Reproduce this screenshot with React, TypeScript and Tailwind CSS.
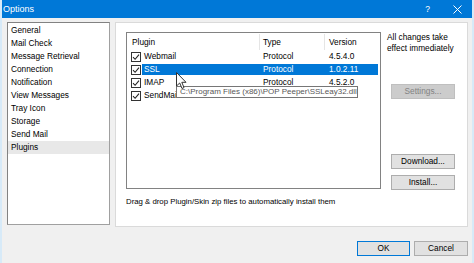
import React from "react";

const categories = [
  "General",
  "Mail Check",
  "Message Retrieval",
  "Connection",
  "Notification",
  "View Messages",
  "Tray Icon",
  "Storage",
  "Send Mail",
  "Plugins",
];

const plugins = [
  { name: "Webmail", type: "Protocol", version: "4.5.4.0" },
  { name: "SSL", type: "Protocol", version: "1.0.2.11" },
  { name: "IMAP", type: "Protocol", version: "4.5.2.0" },
  { name: "SendMail", type: "Protocol", version: "4.5.2.0" },
];

const CheckBox: React.FC = () => (
  <div className="w-[10px] h-[10px] border border-[#333] bg-white flex items-center justify-center shrink-0">
    <svg width="8" height="8" viewBox="0 0 8 8">
      <path d="M1 4.2 L3.1 6.3 L7 1.6" fill="none" stroke="#222" strokeWidth="1.1" />
    </svg>
  </div>
);

const Button: React.FC<{ label: string; disabled?: boolean; primary?: boolean; className?: string }> = ({
  label,
  disabled,
  primary,
  className = "",
}) => (
  <div
    className={`h-[15px] flex items-center justify-center border ${
      disabled
        ? "bg-[#cccccc] border-[#bfbfbf] text-[#838383]"
        : primary
        ? "bg-[#e1e1e1] border-[#0078d7] text-black"
        : "bg-[#e1e1e1] border-[#adadad] text-black"
    } ${className}`}
  >
    {label}
  </div>
);

export default function App() {
  return (
    <div
      className="relative w-[474px] h-[263px] bg-[#f0f0f0] flex flex-col text-[8.3px] leading-[13px] text-black overflow-hidden border-x-[2px] border-[#d7eaf8]"
      style={{ fontFamily: '"Liberation Sans", Arial, sans-serif' }}
    >
      {/* Title bar */}
      <div className="h-[18px] bg-[#0078d7] flex items-center pl-[1px] text-white text-[9px] shrink-0">
        <span>Options</span>
        <span className="ml-auto mr-[23px] text-[8.5px]">?</span>
        <svg width="9" height="9" viewBox="0 0 9 9" className="mr-[10px]">
          <path d="M0.5 0.5 L8.5 8.5 M8.5 0.5 L0.5 8.5" stroke="white" strokeWidth="1" />
        </svg>
      </div>

      <div className="flex pt-[4px] pl-[5px]">
        {/* Category list */}
        <div className="w-[103px] h-[203px] bg-white border border-[#a0a0a0] border-t-[#828282] border-l-[#828282] pt-[1px]">
          {categories.map((c) => (
            <div
              key={c}
              className={`h-[13px] pl-[3px] flex items-center ${c === "Plugins" ? "bg-[#e8e8e8]" : ""}`}
            >
              {c}
            </div>
          ))}
        </div>

        {/* Plugins panel */}
        <div className="ml-[5px] w-[353px] h-[205px] bg-white border border-[#dadada] flex pt-[9px] pl-[10px]">
          <div className="w-[255px] flex flex-col">
            <div className="h-[157px] border border-[#828282] bg-white">
              <div className="h-[16px] mt-[1px] flex items-center">
                <div className="w-[133px] pl-[5px] h-full flex items-center border-r border-[#e5e5e5]">Plugin</div>
                <div className="w-[65px] pl-[3px] h-full flex items-center border-r border-[#e5e5e5]">Type</div>
                <div className="pl-[4px]">Version</div>
              </div>
              {plugins.map((p) => {
                const sel = p.name === "SSL";
                return (
                  <div key={p.name} className="h-[13px] flex items-center pl-[4px]">
                    <CheckBox />
                    <div
                      className={`ml-[1px] h-[11px] w-[236px] flex items-center ${
                        sel ? "bg-[#0078d7] text-white" : ""
                      }`}
                    >
                      <div className="w-[118px] pl-[2px]">{p.name}</div>
                      <div className="w-[65px] pl-[3px]">{p.type}</div>
                      <div className="pl-[4px]">{p.version}</div>
                    </div>
                  </div>
                );
              })}
            </div>
            <div className="mt-[6px] text-[7.8px]">
              Drag &amp; drop Plugin/Skin zip files to automatically install them
            </div>
          </div>

          <div className="ml-[6px] flex flex-col">
            <div className="leading-[11px] text-[8.3px]">
              All changes take
              <br />
              effect immediately
            </div>
            <Button label="Settings..." disabled className="w-[64px] ml-[4px] mt-[30px]" />
            <Button label="Download..." className="w-[64px] ml-[4px] mt-[55px]" />
            <Button label="Install..." className="w-[64px] ml-[4px] mt-[6px]" />
          </div>
        </div>
      </div>

      {/* Bottom buttons */}
      <div className="flex justify-end gap-[4px] pr-[4px] mt-[14px]">
        <Button label="OK" primary className="w-[53px]" />
        <Button label="Cancel" className="w-[54px]" />
      </div>

      {/* Tooltip */}
      <div className="absolute left-[174px] top-[86px] h-[12px] w-[182px] bg-white border border-[#767676] text-[#575757] text-[8px] leading-[10px] pl-[3px] flex items-center">
        C:\Program Files (x86)\POP Peeper\SSLeay32.dll
      </div>

      {/* Mouse cursor */}
      <svg className="absolute left-[174px] top-[72px]" width="12" height="18" viewBox="0 0 12 18">
        <path
          d="M0.5 0.5 L0.5 14 L3.7 11 L6 16.5 L8 15.6 L5.8 10.3 L10 10.3 Z"
          fill="white"
          stroke="#333"
          strokeWidth="1"
        />
      </svg>
    </div>
  );
}
